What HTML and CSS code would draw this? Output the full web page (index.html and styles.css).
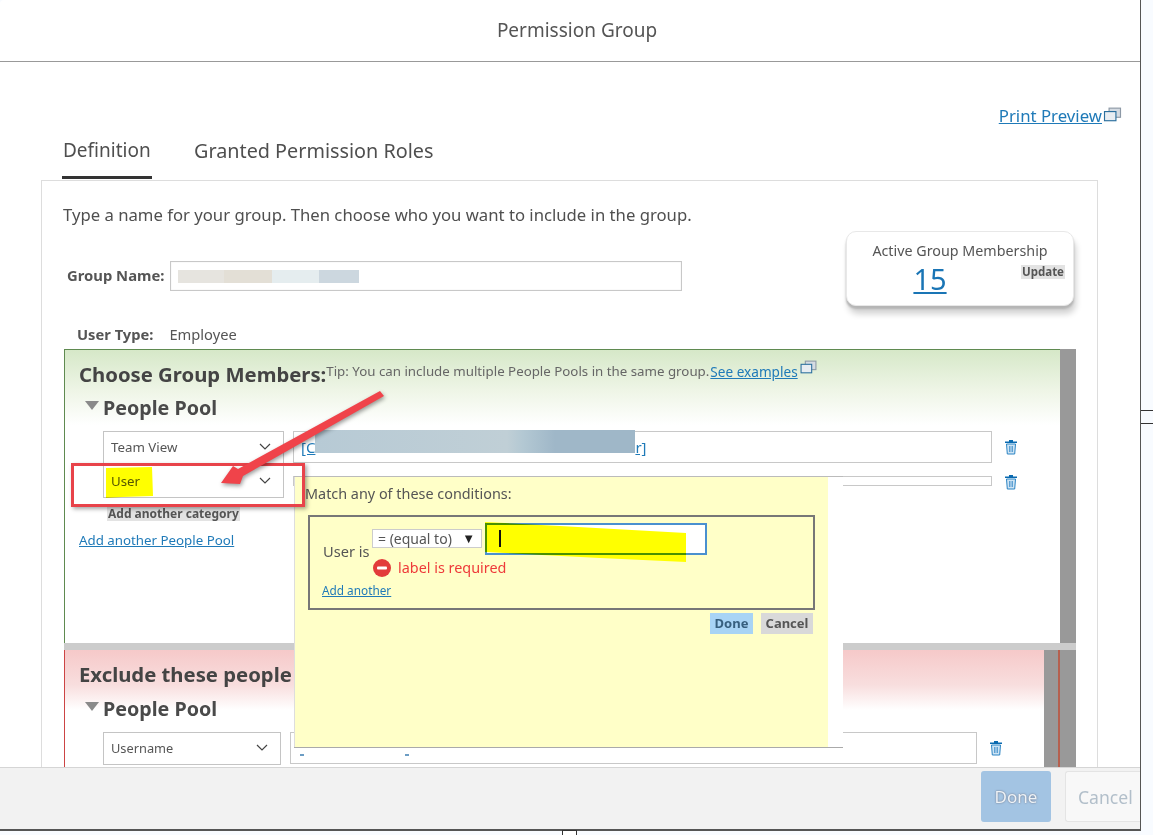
FILE: index.html
```html
<!DOCTYPE html>
<html lang="en">
<head>
<meta charset="utf-8">
<title>Permission Group</title>
<link rel="stylesheet" href="styles.css">
</head>
<body>
<div class="stage">
  <div class="modal">
    <header class="modal-head">Permission Group</header>
    <main class="modal-main">
      <div class="print-row"><a class="link" href="#">Print Preview</a><svg class="ext-icon" viewBox="0 0 16 14"><rect x="5" y="1" width="10" height="8" fill="#d5dbe2" stroke="#8d99a6"/><rect x="1" y="4" width="10" height="8" fill="#e8edf2" stroke="#2b6f9e"/></svg></div>
      <nav class="tabs">
        <span class="tab tab-active">Definition</span>
        <span class="tab">Granted Permission Roles</span>
      </nav>
      <section class="panel">
        <div class="panel-head">
          <div class="panel-left">
            <p class="intro">Type a name for your group. Then choose who you want to include in the group.</p>
            <div class="name-row">
              <label class="name-label">Group Name:</label>
              <div class="name-input"><span class="blur-a"></span><span class="blur-b"></span><span class="blur-c"></span><span class="blur-d"></span></div>
            </div>
            <div class="type-row"><b>User Type:</b><span>Employee</span></div>
          </div>
          <div class="member-card">
            <div class="member-title">Active Group Membership</div>
            <div class="member-line"><a class="member-count" href="#">15</a><span class="tiny-btn">Update</span></div>
          </div>
        </div>

        <div class="pool pool-green">
          <div class="pool-body green-body">
            <div class="pool-title-row"><h2 class="pool-title">Choose Group Members:</h2><span class="tip">Tip: You can include multiple People Pools in the same group.</span><a class="link tip-link" href="#">See examples</a><svg class="ext-icon small" viewBox="0 0 16 14"><rect x="5" y="1" width="10" height="8" fill="#d5dbe2" stroke="#8d99a6"/><rect x="1" y="4" width="10" height="8" fill="#e8edf2" stroke="#2b6f9e"/></svg></div>
            <h3 class="pool-sub"><span class="tri"></span>People Pool</h3>
            <div class="rule-row">
              <div class="select">Team View<svg class="chev" viewBox="0 0 12 7"><path d="M1 1l5 5 5-5" fill="none" stroke="#444" stroke-width="1.2"/></svg></div>
              <div class="value-input"><a class="link" href="#">[C</a><span class="blur-long"></span><a class="link" href="#">r]</a></div>
              <svg class="trash" viewBox="0 0 14 16"><path d="M5 1h4v1.5h4V4H1V2.500h4z" fill="#0a6ab0"/><path d="M2.500 5h9l-.8 10H3.300z" fill="#cfe4f4" stroke="#2b84c4"/><path d="M5.500 7v6M7 7v6M8.500 7v6" stroke="#2b84c4" stroke-width=".7"/></svg>
            </div>
            <div class="rule-row second">
              <div class="select">User<svg class="chev" viewBox="0 0 12 7"><path d="M1 1l5 5 5-5" fill="none" stroke="#444" stroke-width="1.2"/></svg></div>
              <div class="value-input stub"></div>
              <svg class="trash stub-trash" viewBox="0 0 14 16"><path d="M5 1h4v1.5h4V4H1V2.500h4z" fill="#0a6ab0"/><path d="M2.500 5h9l-.8 10H3.300z" fill="#cfe4f4" stroke="#2b84c4"/><path d="M5.500 7v6M7 7v6M8.500 7v6" stroke="#2b84c4" stroke-width=".7"/></svg>
            </div>
            <span class="tiny-btn add-cat">Add another category</span>
            <a class="link add-pool" href="#">Add another People Pool</a>
          </div>
          <div class="pool-stripe"></div>
        </div>

        <div class="pool-sep"></div>

        <div class="pool pool-red">
          <div class="pool-body red-body">
            <h2 class="pool-title">Exclude these people</h2>
            <h3 class="pool-sub"><span class="tri"></span>People Pool</h3>
            <div class="rule-row red-row">
              <div class="select narrow">Username<svg class="chev" viewBox="0 0 12 7"><path d="M1 1l5 5 5-5" fill="none" stroke="#444" stroke-width="1.2"/></svg></div>
              <div class="value-input wide-red"><span class="frag-link"></span><span class="frag-link second-frag"></span></div>
              <svg class="trash" viewBox="0 0 14 16"><path d="M5 1h4v1.5h4V4H1V2.500h4z" fill="#0a6ab0"/><path d="M2.500 5h9l-.8 10H3.300z" fill="#cfe4f4" stroke="#2b84c4"/><path d="M5.500 7v6M7 7v6M8.500 7v6" stroke="#2b84c4" stroke-width=".7"/></svg>
            </div>
          </div>
          <div class="pool-stripe red-stripe"></div>
        </div>
      </section>
    </main>
    <footer class="modal-foot">
      <button class="foot-btn foot-done">Done</button>
      <button class="foot-btn foot-cancel">Cancel</button>
    </footer>
  </div>

  <div class="popup">
    <div class="popup-yellow">
      <p class="match">Match any of these conditions:</p>
      <div class="cond-box">
        <div class="cond-row">
          <span class="cond-label">User is</span>
          <div class="cond-select">= (equal to)<span class="cond-arrow">▼</span></div>
          <div class="cond-input"></div>
        </div>
        <div class="cond-error">
          <svg class="err-icon" viewBox="0 0 18 18"><circle cx="9" cy="9" r="9" fill="#e23b3b"/><rect x="4" y="7.500" width="10" height="3" rx="1" fill="#fff"/></svg>
          <span>label is required</span>
        </div>
        <a class="link add-another" href="#">Add another</a>
      </div>
      <div class="popup-btns"><span class="pop-btn pop-done">Done</span><span class="pop-btn pop-cancel">Cancel</span></div>
    </div>
  </div>

  <div class="callout"></div>
  <svg class="marks" viewBox="0 0 1153 835">
    <polygon class="marker" points="106,468 152,467 153,496 122,497 106,498"/>
    <polygon class="marker" points="485,522 560,526 686,533 686,562 600,558 485,552"/>
    <rect x="499" y="530" width="2" height="17" fill="#111"/>
    <polygon class="arrow" points="380,391 384,396 243,476 240,484 221,483 233,466 238,469"/>
  </svg>
  <div class="frag-right"></div>
  <div class="frag-bottom"></div>
</div>
</body>
</html>
```

FILE: styles.css
```css
* { box-sizing: border-box; }
html, body { margin: 0; padding: 0; }
body { font-family: "Noto Sans", "Open Sans", sans-serif; color: #4a4a4a; background: #f8fbff; }
p, h2, h3 { margin: 0; }
.stage { position: relative; width: 1153px; height: 835px; overflow: hidden; }
.link { color: #1f7ab8; text-decoration: underline; }

.modal { width: 1141px; height: 831px; display: flex; flex-direction: column; background: #fff; border-right: 1px solid #555; border-bottom: 2px solid #555; border-top-left-radius: 4px; }
.modal-head { height: 62px; flex: none; display: flex; align-items: center; justify-content: center; font-size: 19px; color: #555; border-bottom: 1px solid #999; padding-left: 14px; padding-bottom: 2px; }
.modal-main { height: 705px; flex: none; overflow: hidden; }

.print-row { display: flex; justify-content: flex-end; align-items: center; height: 20px; margin-top: 43px; padding-right: 18px; font-size: 16.800px; }
.ext-icon { width: 19px; height: 16px; margin-left: 1px; }
.ext-icon.small { margin-left: 2px; width: 17px; height: 15px; margin-top: -1px; }

.tabs { display: flex; height: 52px; margin-left: 62px; margin-top: 4px; }
.tab { font-size: 19.800px; color: #4f4f4f; padding-top: 8px; margin-right: 42px; }
.tab-active { width: 90px; font-size: 19px; margin-right: 42px; padding-left: 1px; border-bottom: 3px solid #333; height: 50px; white-space: nowrap; }

.panel { margin-left: 41px; width: 1057px; height: 660px; border: 1px solid #ddd; border-bottom: 0; margin-top: -1px; }
.panel-head { height: 168px; display: flex; justify-content: space-between; padding-left: 21px; padding-right: 23px; }
.panel-left { padding-top: 24px; }
.intro { font-size: 16.700px; line-height: 20px; color: #4f4f4f; white-space: nowrap; }
.name-row { display: flex; align-items: center; margin-top: 36px; height: 30px; }
.name-label { font-size: 14.800px; font-weight: 700; width: 107px; padding-left: 4px; padding-bottom: 2px; color: #555; white-space: nowrap; }
.name-input { width: 512px; height: 30px; border: 1px solid #c8c8c8; box-shadow: inset 0 0 1px #ccc; display: flex; align-items: center; padding-left: 7px; }
.blur-a { width: 46px; height: 13px; background: #e6e4df; }
.blur-b { width: 48px; height: 13px; background: #e3dfd6; }
.blur-c { width: 47px; height: 13px; background: #e5edef; }
.blur-d { width: 40px; height: 13px; background: #ccd7df; }
.type-row { display: flex; gap: 16px; font-size: 14.700px; margin-top: 33px; height: 20px; padding-left: 14px; color: #555; }
.member-card { width: 228px; height: 75px; margin-top: 50px; border: 1px solid #e8e8e8; border-radius: 10px; box-shadow: 0 3px 2px #b5b5b5, 2px 8px 6px rgba(0,0,0,.18); padding-top: 9px; text-align: center; background: #fff; }
.member-title { font-size: 14.300px; color: #555; }
.member-line { position: relative; display: flex; justify-content: center; padding-right: 59px; padding-left: 26px; }
.member-count { font-size: 29px; line-height: 38px; color: #1a75b5; text-decoration: underline; margin-left: -27px; }
.tiny-btn { font-size: 11.500px; font-weight: 700; color: #555; background: #e3e3e3; line-height: 14px; }
.member-line .tiny-btn { margin: 2px 0 0 auto; padding: 0 1px; position: absolute; right: 8px; top: 3px; }

.pool { display: flex; margin-left: 22px; width: 1012px; }
.pool-body { display: flex; flex-direction: column; align-items: flex-start; }
.pool-stripe { background: #999; }
.pool-green { height: 294px; }
.green-body { width: 996px; border: 1px solid #5f8a50; border-bottom: 0; border-right: 0; padding-left: 14px; background: linear-gradient(#d6e8c8 0, #eef5e6 40px, #fff 75px); }
.pool-green .pool-stripe { width: 16px; }
.pool-title-row { display: flex; align-items: flex-start; height: 46px; padding-top: 11px; white-space: nowrap; }
.pool-title { font-size: 20.300px; font-weight: 700; color: #444; line-height: 27px; white-space: nowrap; }
.tip { font-size: 13.300px; color: #666; line-height: 20px; margin-top: 0; }
.tip-link { font-size: 13.600px; margin-left: 1px; line-height: 20px; margin-top: 1px; }
.pool-sub { display: flex; align-items: center; font-size: 19.700px; font-weight: 700; color: #4a4a4a; line-height: 24px; margin-left: 6px; white-space: nowrap; }
.tri { width: 0; height: 0; border-left: 7px solid transparent; border-right: 7px solid transparent; border-top: 9px solid #8a8a8a; margin-right: 4px; margin-top: -6px; }
.rule-row { display: flex; align-items: flex-start; margin-left: 24px; margin-top: 11px; }
.rule-row.second { margin-top: 1px; }
.select { width: 181px; height: 33px; border: 1px solid #c4c4c4; background: #fff; display: flex; align-items: center; justify-content: space-between; padding: 0 12px 2px 7px; font-size: 13.300px; color: #555; }
.chev { width: 12px; height: 7px; }
.value-input { width: 699px; height: 32px; margin-left: 9px; border: 1px solid #c8c8c8; background: #fff; display: flex; align-items: center; padding-left: 7px; font-size: 15px; }
.blur-long { width: 320px; height: 23px; margin-top: -11px; background: linear-gradient(90deg, #b7cad5, #c0cfd6 60%, #b3c8d3 65%, #9fb7c8 75%, #9fb7c8); }
.value-input.stub { height: 10px; margin-top: 11px; }
.trash { width: 14px; height: 16px; margin-left: 12px; margin-top: 8px; }
.stub-trash { margin-top: 9px; }
.add-cat { margin-left: 28px; margin-top: 9px; padding: 0 1px; color: #555; font-size: 12px; white-space: nowrap; }
.add-pool { font-size: 13.300px; margin-top: 10px; }

.pool-sep { margin-left: 22px; width: 1012px; height: 7px; background: #ccc; }
.pool-red { height: 120px; }
.red-body { width: 980px; padding-left: 14px; border-left: 1px solid #c44; background: linear-gradient(#f6c9c9 0, #f8dede 35px, #fff 60px); padding-top: 11px; }
.red-body .pool-title { margin-bottom: 9px; }
.red-stripe { width: 32px; background: linear-gradient(90deg, #999 14px, #b5604f 14px, #b5604f 16px, #999 16px); }
.red-row { margin-top: 11px; }
.red-row .select { font-size: 12.800px; }
.select.narrow { width: 178px; }
.value-input.wide-red { width: 687px; align-items: flex-start; padding-left: 9px; padding-top: 16px; gap: 101px; }
.frag-link { width: 4px; height: 7px; border-bottom: 2px solid #6c9dc4; }

.modal-foot { flex: 1; display: flex; align-items: flex-start; gap: 14px; justify-content: flex-end; padding-top: 3px; background: #f2f2f2; border-top: 1px solid #d5d5d5; overflow: hidden; }
.foot-btn { font-family: inherit; height: 51px; border-radius: 3px; flex: none; }
.foot-done { width: 70px; font-size: 17px; background: #a3c4e3; border: 0; color: #eef3f7; text-shadow: 0 0 2px #667; }
.foot-cancel { width: 75px; font-size: 17.600px; background: #f8f8f8; border: 1px solid #e4e4e4; border-right: 0; color: #b2bfca; text-align: left; padding-left: 12px; border-radius: 3px 0 0 3px; white-space: nowrap; }

.popup { position: absolute; left: 294px; top: 476px; width: 549px; height: 272px; background: #fff; border-top: 1px solid #bbb; border-bottom: 1px solid #aaa; }
.popup-yellow { width: 534px; height: 100%; background: #ffffc8; padding: 7px 0 0 10px; border-left: 1px solid #ddd; }
.match { font-size: 14.400px; line-height: 20px; color: #555; white-space: nowrap; }
.cond-box { width: 507px; height: 95px; margin-top: 11px; margin-left: 3px; border: 2px solid #777; padding: 6px 0 0 13px; }
.cond-row { display: flex; align-items: flex-start; }
.cond-label { font-size: 14.600px; color: #555; width: 49px; margin-top: 18px; white-space: nowrap; }
.cond-select { width: 110px; height: 19px; margin-top: 6px; background: #fff; border: 1px solid #ccc; font-size: 14px; line-height: 17px; color: #555; display: flex; justify-content: space-between; padding: 0 6px 0 5px; white-space: nowrap; }
.cond-arrow { font-size: 13px; color: #222; }
.cond-input { width: 222px; height: 32px; margin-left: 3px; border: 2px solid #4a90cf; background: #fff; }
.cond-error { display: flex; align-items: center; gap: 7px; margin: -3px 0 0 50px; font-size: 14.400px; color: #ee3a3a; white-space: nowrap; }
.err-icon { width: 18px; height: 18px; }
.add-another { display: block; font-size: 11.800px; margin: 5px 0 0 -1px; }
.popup-btns { display: flex; justify-content: flex-end; gap: 8px; width: 508px; margin-top: 3px; }
.pop-btn { height: 21px; font-size: 13px; font-weight: 700; line-height: 21px; text-align: center; }
.pop-done { width: 43px; background: #a8d4f5; color: #37607f; }
.pop-cancel { width: 52px; background: #d9d9d9; color: #555; }

.callout { position: absolute; left: 71px; top: 463px; width: 234px; height: 44px; border: 3px solid #e8434a; box-shadow: 2px 2px 4px rgba(0,0,0,.35); }
.marks { position: absolute; left: 0; top: 0; width: 1153px; height: 835px; pointer-events: none; }
.marker { fill: #ffff00; mix-blend-mode: multiply; }
.arrow { fill: #f0434a; filter: drop-shadow(1px 2px 2px rgba(0,0,0,.4)); }
.frag-right { position: absolute; left: 1141px; top: 410px; width: 12px; height: 14px; border-top: 1px solid #333; border-bottom: 1px solid #333; }
.frag-bottom { position: absolute; left: 562px; top: 830px; width: 15px; height: 5px; border: 1px solid #333; border-bottom: 0; background: #fff; }
```
